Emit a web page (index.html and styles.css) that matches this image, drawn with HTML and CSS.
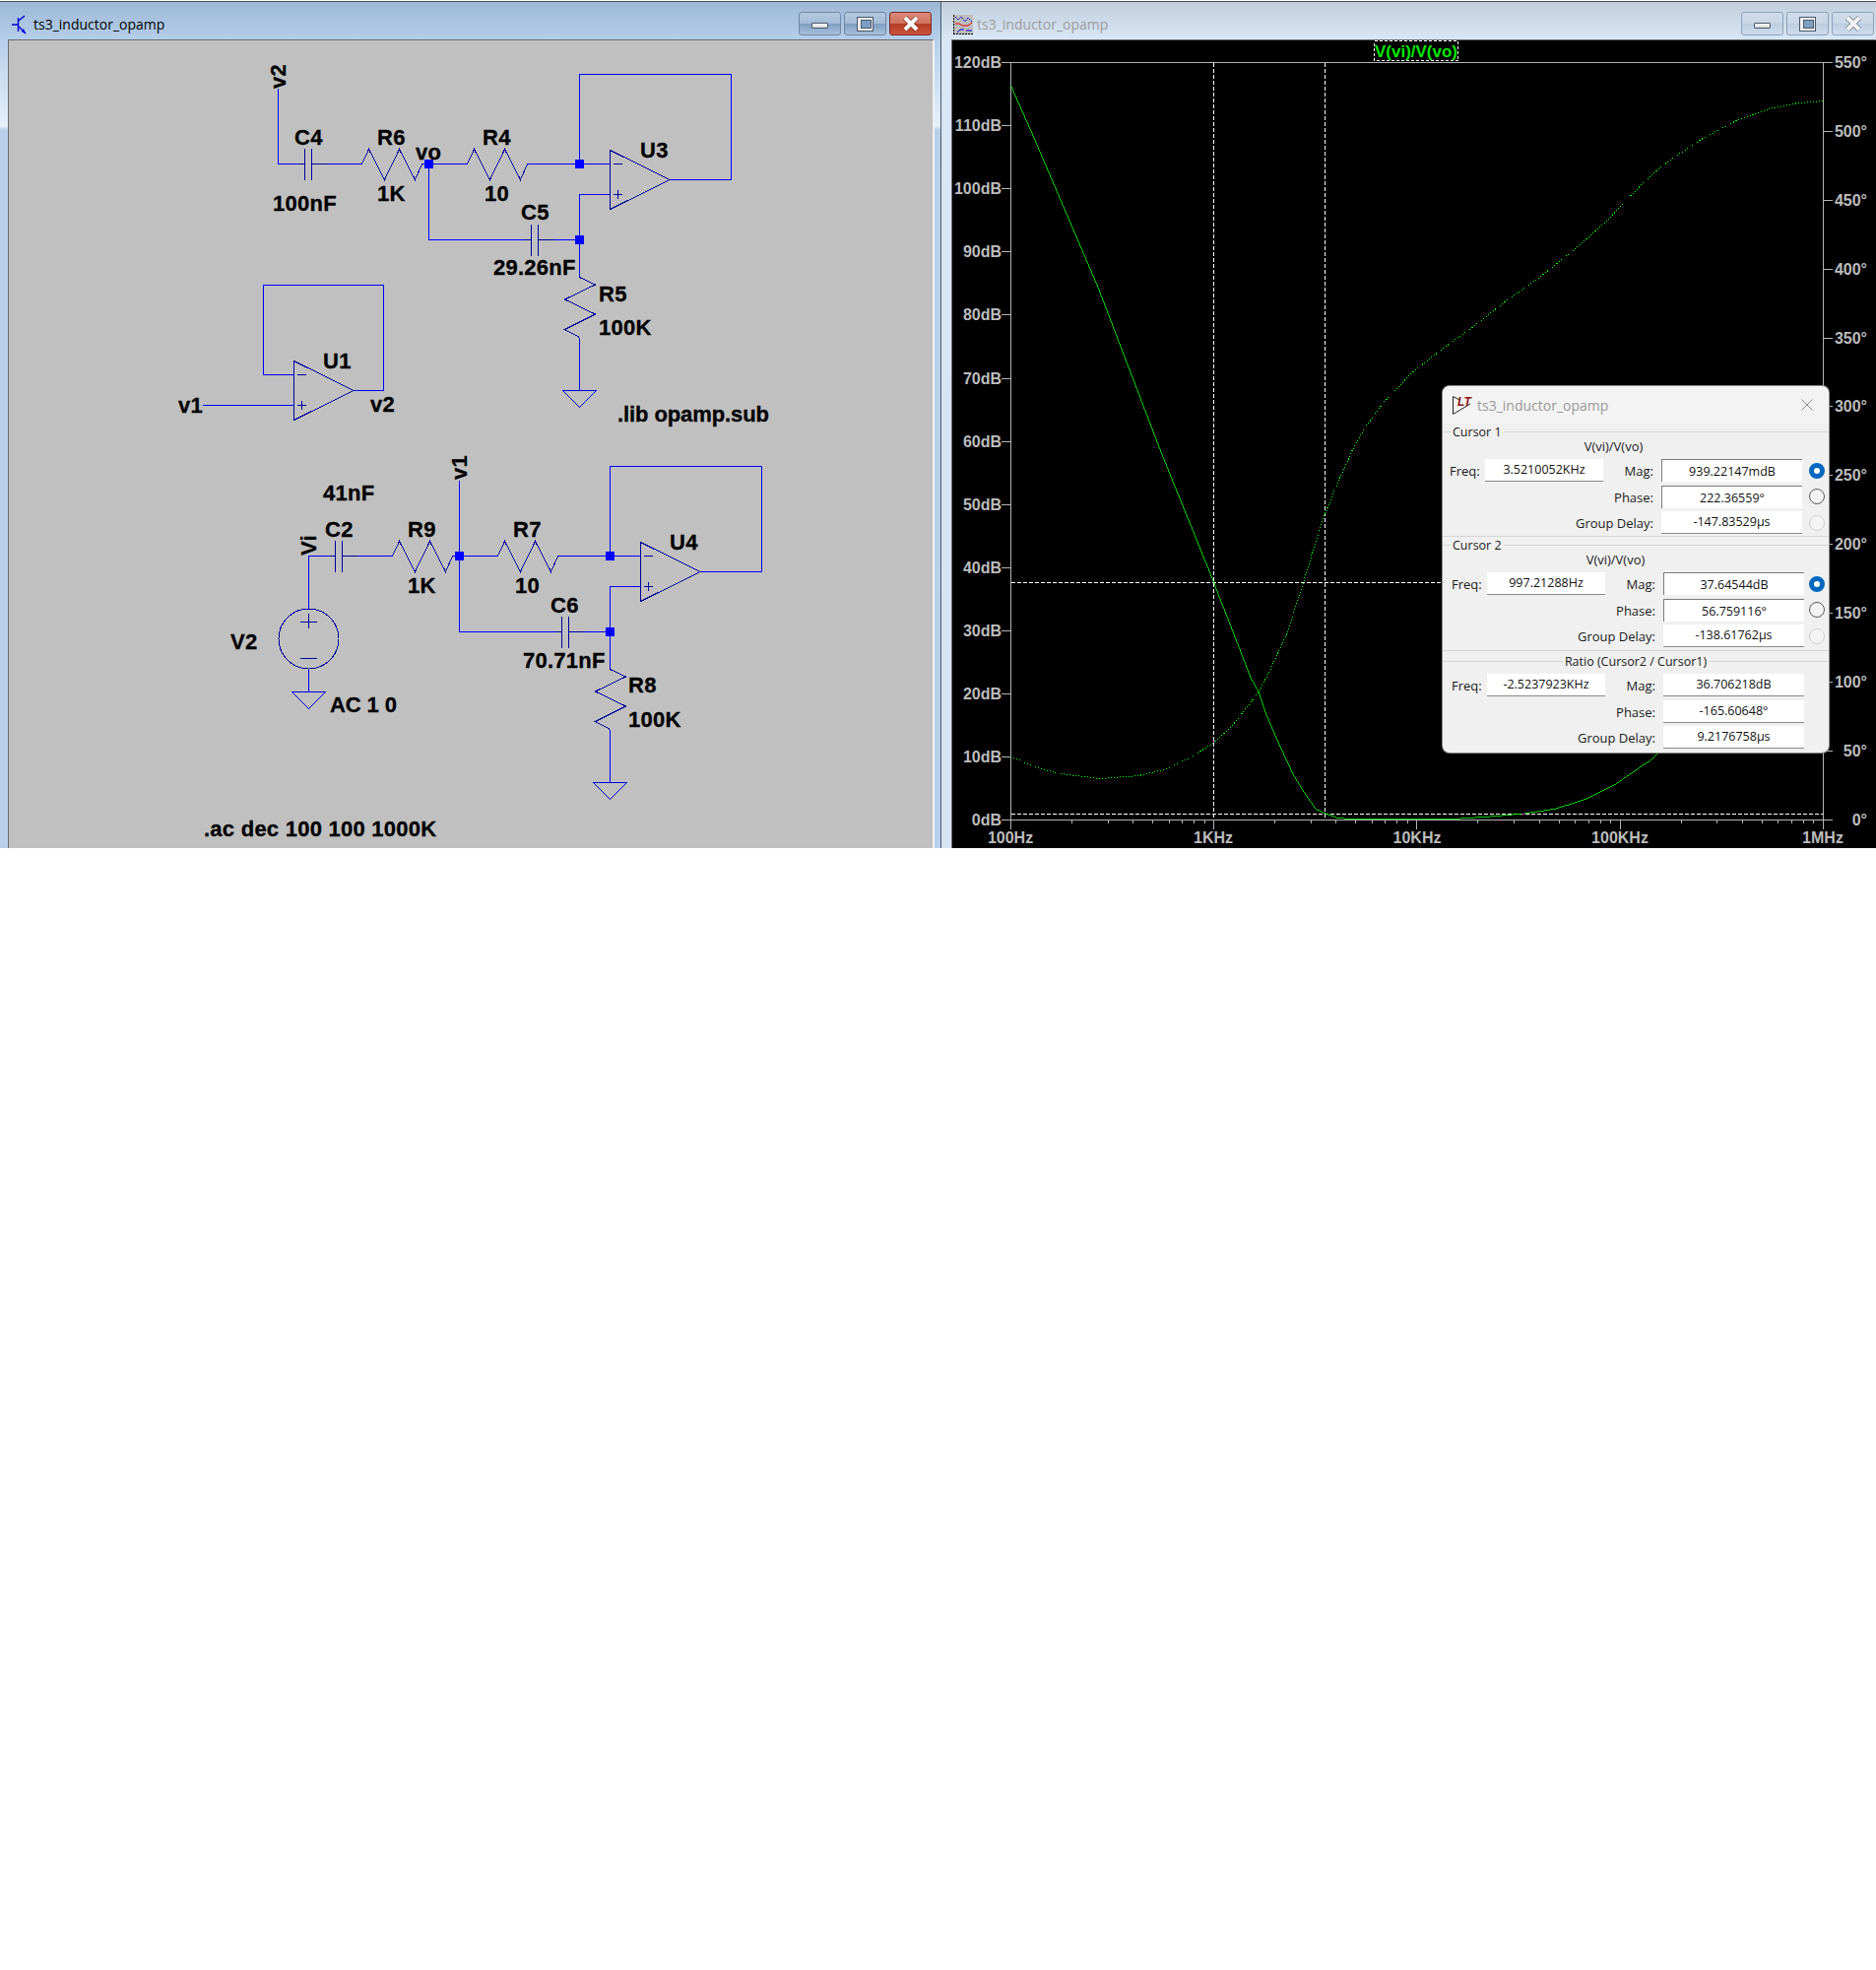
FILE: index.html
```html
<!doctype html>
<html lang="en">
<head>
    <meta charset="UTF-8">
    <title>ts3_inductor_opamp</title>
    <link rel="stylesheet" href="styles.css">
</head>
<body>
<div class="desktop">

    <!-- schematic window -->
    <div class="win win-schem">
        <div class="titlebar">
            <svg class="app-icon" viewBox="0 0 20 20">
                <path class="ic-blue" d="M1 10H7M7.500 3V17M8 6L14 1M8 12L15 19"/>
                <path class="ic-fill" d="M15 19L10.500 17L13 14Z"/>
            </svg>
            <span class="title">ts3_inductor_opamp</span>
            <div class="btns">
                <div class="btn"><i class="g-min"></i></div>
                <div class="btn"><i class="g-max"></i></div>
                <div class="btn btn-close">
                    <svg class="g-x" viewBox="0 0 18 16"><path class="x-edge" d="M3 2L15 14M15 2L3 14"/><path class="x-core" d="M3 2L15 14M15 2L3 14"/></svg>
                </div>
            </div>
        </div>
        <div class="frame">
            <div class="canvas">
                <svg class="sheet" width="938" height="820" viewBox="9 41 938 820">
                    <defs>
                        <polyline id="res-h" points="0,0 7,-15 23,16 38,-15 54,16 61,0"/>
                        <polyline id="res-v" points="0,0 16,7.500 -15,22.500 16,37.500 -15,53 0,61"/>
                        <path id="cap" d="M-3.500 -16V16M3.500 -16V16M-3.500 0H-10M3.500 0H20"/>
                        <path id="opamp" d="M0 -14L60.500 16L0 46ZM3.500 0H12.500M3.500 31H12.500M8 26.500V35.500"/>
                        <path id="gnd" d="M-17 0H17L0 17Z"/>
                    </defs>

                    <path class="wire" d="M282.500 90V166.500H309.500M316.500 166.500H367.500M428.500 166.500H474.500M535.500 166.500H619.500M435.500 166.500V243.500H539.500M546.500 243.500H588.500M588.500 281.500V197.500H619.500M588.500 166.500V75.500H742.500V182.500H680M588.500 342.500V396.500"/>
                    <path class="wire" d="M206 411.500H298.500M298.500 380.500H267.500V289.500H389.500V396.500H359"/>
                    <path class="wire" d="M313.500 618V564.500H340.500M347.500 564.500H398.500M459.500 564.500H505.500M566.500 564.500H650.500M466.500 487.500V641.500H570.500M577.500 641.500H619.500M619.500 679.500V595.500H650.500M619.500 564.500V473.500H773.500V580.500H711M619.500 740.500V794.500M313.500 679V702.500"/>

                    <g class="sym">
                        <use href="#cap" x="313" y="166.500"/>
                        <use href="#res-h" x="367.500" y="166.500"/>
                        <use href="#res-h" x="474.500" y="166.500"/>
                        <use href="#cap" x="543" y="243.500"/>
                        <use href="#opamp" x="619.500" y="166.500"/>
                        <use href="#res-v" x="588.500" y="281.500"/>
                        <use href="#opamp" x="298.500" y="380.500"/>
                        <use href="#cap" x="344" y="564.500"/>
                        <use href="#res-h" x="398.500" y="564.500"/>
                        <use href="#res-h" x="505.500" y="564.500"/>
                        <use href="#cap" x="574" y="641.500"/>
                        <use href="#opamp" x="650.500" y="564.500"/>
                        <use href="#res-v" x="619.500" y="679.500"/>
                        <circle cx="313.500" cy="648.500" r="30.500"/>
                        <path d="M305 631.500H322M313.500 623V638M305 668.500H322"/>
                    </g>
                    <g class="gnd">
                        <use href="#gnd" x="588.500" y="396.500"/>
                        <use href="#gnd" x="619.500" y="794.500"/>
                        <use href="#gnd" x="313.500" y="702.500"/>
                    </g>
                    <g class="node">
                        <rect x="431" y="162" width="9" height="9"/>
                        <rect x="584" y="162" width="9" height="9"/>
                        <rect x="584" y="239" width="9" height="9"/>
                        <rect x="462" y="560" width="9" height="9"/>
                        <rect x="615" y="560" width="9" height="9"/>
                        <rect x="615" y="637" width="9" height="9"/>
                    </g>

                    <g class="lbl">
                        <text transform="translate(290 90) rotate(-90)">v2</text>
                        <text x="299" y="147">C4</text>
                        <text x="383" y="147">R6</text>
                        <text x="422" y="162">vo</text>
                        <text x="490" y="147">R4</text>
                        <text x="650" y="160">U3</text>
                        <text x="277" y="214">100nF</text>
                        <text x="383" y="204">1K</text>
                        <text x="492" y="204">10</text>
                        <text x="529" y="223">C5</text>
                        <text x="501" y="279">29.26nF</text>
                        <text x="608" y="306">R5</text>
                        <text x="608" y="340">100K</text>
                        <text x="328" y="374">U1</text>
                        <text x="181" y="419">v1</text>
                        <text x="376" y="418">v2</text>
                        <text class="tight" x="627" y="428">.lib opamp.sub</text>
                        <text x="328" y="508">41nF</text>
                        <text transform="translate(474 487) rotate(-90)">v1</text>
                        <text transform="translate(321 564) rotate(-90)">Vi</text>
                        <text x="330" y="545">C2</text>
                        <text x="414" y="545">R9</text>
                        <text x="521" y="545">R7</text>
                        <text x="680" y="558">U4</text>
                        <text x="414" y="602">1K</text>
                        <text x="523" y="602">10</text>
                        <text x="559" y="622">C6</text>
                        <text x="531" y="678">70.71nF</text>
                        <text x="638" y="703">R8</text>
                        <text x="638" y="738">100K</text>
                        <text x="234" y="659">V2</text>
                        <text class="tight" x="335" y="723">AC 1 0</text>
                        <text x="207" y="849">.ac dec 100 100 1000K</text>
                    </g>
                </svg>
            </div>
        </div>
    </div>

    <!-- waveform window -->
    <div class="win win-plot">
        <div class="titlebar">
            <svg class="plot-icon" viewBox="0 0 20 20">
                <rect width="20" height="20" fill="#bdbdbd"/>
                <path d="M0.500 0V20M0 19.500H20" stroke="#000" stroke-dasharray="2 1"/>
                <path d="M2 2L5 5L8 2L12 7L15 3L19 7" stroke="#0000d0" fill="none" stroke-dasharray="2 1"/>
                <path d="M2 9H6L9 11H13L15 11L19 8" stroke="#e00000" fill="none"/>
                <path d="M4 18L7 15H11M13 16H19" stroke="#0000d0" fill="none"/>
            </svg>
            <span class="title">ts3_inductor_opamp</span>
            <div class="btns">
                <div class="btn"><i class="g-min"></i></div>
                <div class="btn"><i class="g-max"></i></div>
                <div class="btn">
                    <svg class="g-x" viewBox="0 0 18 16"><path class="x-edge" d="M3 2L15 14M15 2L3 14"/><path class="x-core" d="M3 2L15 14M15 2L3 14"/></svg>
                </div>
            </div>
        </div>
        <div class="frame">
            <div class="canvas canvas-plot">
                <svg class="sheet" width="938" height="820" viewBox="967 41 938 820">
                    <rect class="trace-tag" x="1395.500" y="41.500" width="85" height="20"/>
                    <text class="trace-name" x="1438" y="58">V(vi)/V(vo)</text>

                    <path class="axis" d="M1026.500 63.500H1851.500V832.500H1026.500Z"/>
                    <path class="axis" d="M1017 63.500H1026M1017 127.500H1026M1017 191.500H1026M1017 255.500H1026M1017 319.500H1026M1017 384.500H1026M1017 448.500H1026M1017 512.500H1026M1017 576.500H1026M1017 640.500H1026M1017 704.500H1026M1017 768.500H1026M1017 832.500H1026"/>
                    <path class="axis" d="M1852 63.500H1861M1852 133.500H1861M1852 203.500H1861M1852 273.500H1861M1852 343.500H1861M1852 412.500H1861M1852 482.500H1861M1852 552.500H1861M1852 622.500H1861M1852 692.500H1861M1852 762.500H1861M1852 832.500H1861"/>
                    <path class="axis" d="M1026.500 833V842M1232.500 833V842M1438.500 833V842M1645.500 833V842M1851.500 833V842"/>
                    <path class="axis" d="M1088.500 833v3M1125.500 833v3M1150.500 833v3M1170.500 833v3M1187.500 833v3M1200.500 833v3M1212.500 833v3M1223.500 833v3M1294.500 833v3M1331.500 833v3M1356.500 833v3M1376.500 833v3M1393.500 833v3M1406.500 833v3M1418.500 833v3M1429.500 833v3M1500.500 833v3M1537.500 833v3M1563.500 833v3M1583.500 833v3M1599.500 833v3M1613.500 833v3M1625.500 833v3M1635.500 833v3M1707.500 833v3M1743.500 833v3M1769.500 833v3M1789.500 833v3M1805.500 833v3M1819.500 833v3M1831.500 833v3M1841.500 833v3"/>

                    <g class="ax-lbl ax-left">
                        <text x="1017" y="69">120dB</text>
                        <text x="1017" y="133">110dB</text>
                        <text x="1017" y="197">100dB</text>
                        <text x="1017" y="261">90dB</text>
                        <text x="1017" y="325">80dB</text>
                        <text x="1017" y="390">70dB</text>
                        <text x="1017" y="454">60dB</text>
                        <text x="1017" y="518">50dB</text>
                        <text x="1017" y="582">40dB</text>
                        <text x="1017" y="646">30dB</text>
                        <text x="1017" y="710">20dB</text>
                        <text x="1017" y="774">10dB</text>
                        <text x="1017" y="838">0dB</text>
                    </g>
                    <g class="ax-lbl ax-left">
                        <text x="1896" y="69">550°</text>
                        <text x="1896" y="139">500°</text>
                        <text x="1896" y="209">450°</text>
                        <text x="1896" y="279">400°</text>
                        <text x="1896" y="349">350°</text>
                        <text x="1896" y="418">300°</text>
                        <text x="1896" y="488">250°</text>
                        <text x="1896" y="558">200°</text>
                        <text x="1896" y="628">150°</text>
                        <text x="1896" y="698">100°</text>
                        <text x="1896" y="768">50°</text>
                        <text x="1896" y="838">0°</text>
                    </g>
                    <g class="ax-lbl ax-mid">
                        <text x="1026" y="856">100Hz</text>
                        <text x="1232" y="856">1KHz</text>
                        <text x="1439" y="856">10KHz</text>
                        <text x="1645" y="856">100KHz</text>
                        <text x="1851" y="856">1MHz</text>
                    </g>

                    <path class="cursor" d="M1232.500 64V832M1345.500 64V832M1027 591.500H1851M1027 826.500H1851"/>

                    <polyline class="mag" points="1026.500,87 1050,140 1115.500,293 1179,459 1232.500,591 1240,611 1246.500,627 1256.500,653 1270,688 1278.500,703 1286.500,727 1300,758 1313.500,787 1323.500,803 1336.500,822 1345.500,826 1356.500,830 1368.500,831.500 1420,831.500 1483,831 1520,828.500 1546.500,826 1580,821 1610,811.500 1640,796.500 1653,787.500 1673.500,773.500 1683.500,764 1720,720 1790,640 1851,560"/>
                    <polyline class="phase" points="1026.500,768 1050,778.500 1076.500,785.500 1116.500,790.500 1156.500,787.500 1183.500,781 1210,768.500 1232.500,754 1250,738.500 1272.500,710 1278.500,702 1290,680 1306.500,643.500 1323.500,591.500 1335,553.500 1345.500,521.500 1358.500,490 1373.500,456.500 1386.500,433.500 1405,408.500 1433.500,378.500 1463.500,355 1496.500,331.500 1530,305 1563.500,281.500 1596.500,255 1630,226 1647,208 1663.500,191 1680,175 1696.500,162 1730,140 1763.500,122.500 1796.500,110.500 1823.500,105 1851,102.500"/>
                    <rect class="hit" x="1232" y="752" width="1" height="2"/>
                    <rect class="hit" x="1546" y="826" width="2" height="1"/>
                </svg>

                <!-- cursor readout -->
                <div class="dialog">
                    <div class="dlg-head">
                        <svg class="dlg-icon" viewBox="0 0 21 21">
                            <path d="M1.500 1.500V19.500L19 9" fill="none" stroke="#222"/>
                            <path d="M1.500 1.500L8 5" fill="none" stroke="#222"/>
                            <text x="6" y="11">LT</text>
                        </svg>
                        <span class="dlg-title">ts3_inductor_opamp</span>
                        <svg class="dlg-x" viewBox="0 0 12 12"><path d="M0.500 0.500L11.500 11.500M11.500 0.500L0.500 11.500"/></svg>
                    </div>

                    <div class="group">
                        <div class="legend"><span>Cursor 1</span></div>
                        <div class="expr">V(vi)/V(vo)</div>
                        <div class="readings">
                            <label>Freq:</label><div class="val">3.5210052KHz</div>
                            <label>Mag:</label><div class="val sunken">939.22147mdB</div><i class="radio on"></i>
                            <label class="skip">Phase:</label><div class="val sunken">222.36559°</div><i class="radio"></i>
                            <label class="skip">Group Delay:</label><div class="val">-147.83529µs</div><i class="radio off"></i>
                        </div>
                    </div>

                    <div class="group group-b">
                        <div class="legend"><span>Cursor 2</span></div>
                        <div class="expr">V(vi)/V(vo)</div>
                        <div class="readings">
                            <label>Freq:</label><div class="val">997.21288Hz</div>
                            <label>Mag:</label><div class="val sunken">37.64544dB</div><i class="radio on"></i>
                            <label class="skip">Phase:</label><div class="val sunken">56.759116°</div><i class="radio"></i>
                            <label class="skip">Group Delay:</label><div class="val">-138.61762µs</div><i class="radio off"></i>
                        </div>
                    </div>

                    <div class="group group-b group-ratio">
                        <div class="legend legend-mid"><span>Ratio (Cursor2 / Cursor1)</span></div>
                        <div class="readings">
                            <label>Freq:</label><div class="val">-2.5237923KHz</div>
                            <label>Mag:</label><div class="val">36.706218dB</div><i class="radio-gap"></i>
                            <label class="skip">Phase:</label><div class="val">-165.60648°</div><i class="radio-gap"></i>
                            <label class="skip">Group Delay:</label><div class="val">9.2176758µs</div><i class="radio-gap"></i>
                        </div>
                    </div>
                </div>
            </div>
        </div>
    </div>
</div>
</body>
</html>
```

FILE: styles.css
```css
*{margin: 0;padding: 0;box-sizing: border-box}
body{background: #fff;font-family: "Open Sans", "Liberation Sans", sans-serif}
.desktop{display: flex;height: 861px;padding-top: 1px;overflow: hidden}

/* window chrome */
.win{display: flex;flex-direction: column;border-top: 1px solid #4c4f53}
.win-schem{width: 955px;background: linear-gradient(to bottom, #9db8d6 0, #b6cfea 40px, #e6f0fb 126px, #b8d0ea 130px, #b8d0ea 100%)}
.win-plot{flex: 1;border-left: 1px solid #4c5a68;background: linear-gradient(to bottom, #c1cfdd 0, #d8e6f5 38px, #d6e4f2 100%)}
.titlebar{display: flex;align-items: flex-start;height: 38px;padding-top: 10px}
.win-schem .titlebar{padding-left: 11px;padding-right: 9px}
.win-plot .titlebar{padding-left: 12px;padding-right: 2px}
.title{font-size: 14px;line-height: 20px;margin-top: 3px}
.win-plot .title{color: #9c9c9c}
.app-icon{width: 20px;height: 20px;margin: 3px 3px 0 0;flex: none}
.plot-icon{width: 20px;height: 20px;margin: 3px 4px 0 0;flex: none}
.ic-blue{fill: none;stroke: #0000d8;stroke-width: 1.4}
.ic-fill{fill: #0000d8}
.btns{display: flex;gap: 3px;margin-left: auto}
.btn{display: flex;align-items: center;justify-content: center;width: 43px;height: 24px;border: 1px solid #6f88a6;border-radius: 3px;background: linear-gradient(to bottom, #b4c9e0 0, #a3bbd6 48%, #7f9fc2 52%, #a6c1dd 100%)}
.win-plot .btn{border-color: #8ea2ba;background: linear-gradient(to bottom, #d0dcea 0, #c8d6e6 48%, #bccde0 52%, #cfdeee 100%)}
.btn-close{border-color: #7a2c2c;background: linear-gradient(to bottom, #dc8a78 0, #cf7360 48%, #b33d26 52%, #c9533d 100%)}
.g-min{display: block;width: 17px;height: 6px;margin-top: 3px;background: linear-gradient(#fff, #d8d8d8);border: 1px solid #49586b;border-radius: 1px}
.g-max{display: block;width: 17px;height: 15px;background: #f0f0f0;border: 1px solid #49586b;box-shadow: inset 0 0 0 2px #eee}
.g-max::after{content: "";display: block;width: 9px;height: 7px;margin: 2px 3px;background: #7f9fc2;border: 1px solid #49586b}
.g-x{width: 18px;height: 16px;fill: none}
.x-edge{stroke: #66788c;stroke-width: 5.500}
.x-core{stroke: #f2f2f2;stroke-width: 4}
.btn-close .x-edge{stroke: #8a3020}
.btn-close .x-core{stroke: #fff}

.frame{flex: 1;display: flex;min-height: 0}
.win-schem .frame{padding: 0 6px 0 8px}
.win-plot .frame{padding-left: 10px}
.canvas{position: relative;width: 938px;height: 820px;box-sizing: content-box;border-top: 1px solid #6c6c6c;background: #c0c0c0}
.win-schem .canvas{border-left: 1px solid #6c6c6c;border-right: 2px solid #eef1f4}
.win-plot .canvas{border-left: 1px solid #6c6c6c}
.canvas-plot{background: #000}
.sheet{display: block}

/* schematic */
.wire{fill: none;stroke: #0000ff;shape-rendering: crispEdges}
.sym{fill: none;stroke: #00009c;shape-rendering: crispEdges}
.gnd{fill: none;stroke: #0000e0;shape-rendering: crispEdges}
.node{fill: #0000ff}
.lbl{font: bold 22px "Liberation Sans", Arial, sans-serif;letter-spacing: .25px;fill: #000;stroke: #000;stroke-width: .3}
.lbl .tight{letter-spacing: -.1px}

/* plot */
.axis{fill: none;stroke: #b4b4b4;shape-rendering: crispEdges}
.ax-lbl{font: bold 16px "Liberation Sans", Arial, sans-serif;fill: #bcbcbc}
.ax-left{text-anchor: end}
.ax-mid{text-anchor: middle}
.trace-tag{fill: none;stroke: #fff;stroke-dasharray: 3 2;shape-rendering: crispEdges}
.trace-name{font: bold 17px "Liberation Sans", Arial, sans-serif;fill: #00e800;text-anchor: middle}
.cursor{fill: none;stroke: #fff;stroke-dasharray: 4 2;shape-rendering: crispEdges}
.mag{fill: none;stroke: #00ff00;stroke-width: .8;shape-rendering: crispEdges}
.phase{fill: none;stroke: #00ff00;stroke-dasharray: 1 2;shape-rendering: crispEdges}
.hit{fill: #ff00ff}

/* cursor dialog */
.dialog{position: absolute;left: 498px;top: 351px;width: 392px;height: 372px;background: #f0f0f0;border-radius: 7px;box-shadow: 0 0 0 1px #8a8a8a;overflow: hidden;font-size: 12.500px;color: #1a1a1a}
.dlg-head{display: flex;align-items: center;height: 38px;padding: 0 16px 0 9px;background: #f3f3f3}
.dlg-icon{width: 21px;height: 21px;margin-right: 5px;flex: none}
.dlg-icon text{font: italic bold 12px "Liberation Sans", Arial, sans-serif;fill: #8c1414}
.dlg-title{font-size: 14px;color: #999}
.dlg-x{width: 12px;height: 12px;margin-left: auto;fill: none;stroke: #8a8a8a}

.group{height: 115px;border-bottom: 1px solid #d6d6d6}
.group-b{height: 116px}
.group-ratio{height: 101px;border-bottom: 0}
.legend{display: flex;align-items: center;height: 17px;line-height: 17px}
.legend::before{content: "";width: 8px;height: 1px;background: #d6d6d6}
.legend::after{content: "";flex: 1;height: 1px;background: #d6d6d6}
.legend span{padding: 0 2px}
.legend-mid{margin-top: 2px}
.legend-mid::before{flex: 1}
.expr{width: 199px;height: 19px;margin-left: 74px;font-size: 13px;line-height: 13px;text-align: center}
.group-b .expr{margin-left: 76px}
.readings{display: grid;grid-template-columns: 36px 120px 59px 143px 27px;grid-auto-rows: 23px;row-gap: 3.500px;padding-left: 7px;align-items: center}
.group-b .readings{padding-left: 9px;grid-template-columns: 36px 120px 59px 143px 25px}
.group-ratio .readings{margin-top: 4px}
.readings label{font-size: 13px;white-space: nowrap;line-height: 25px;height: 23px}
.readings label:nth-of-type(n+2){text-align: right;padding-right: 8px}
.skip{grid-column: 1 / 4}
.val{height: 23px;line-height: 21px;text-align: center;background: #fff;border-bottom: 1px solid #8a8a8a;color: #111}
.readings .sunken{border-bottom: 0;border-top: 1px solid #7a7a7a;border-left: 1px solid #7a7a7a;line-height: 24px}
.radio{display: block;justify-self: end;width: 16px;height: 16px;margin-right: 4px;border-radius: 50%;background: #f4f4f4;border: 1.500px solid #5a5a5a}
.radio.on{background: #fff;border: 5px solid #0067c0}
.radio.off{border-color: #cfcfcf}
.radio-gap{display: block}
```
